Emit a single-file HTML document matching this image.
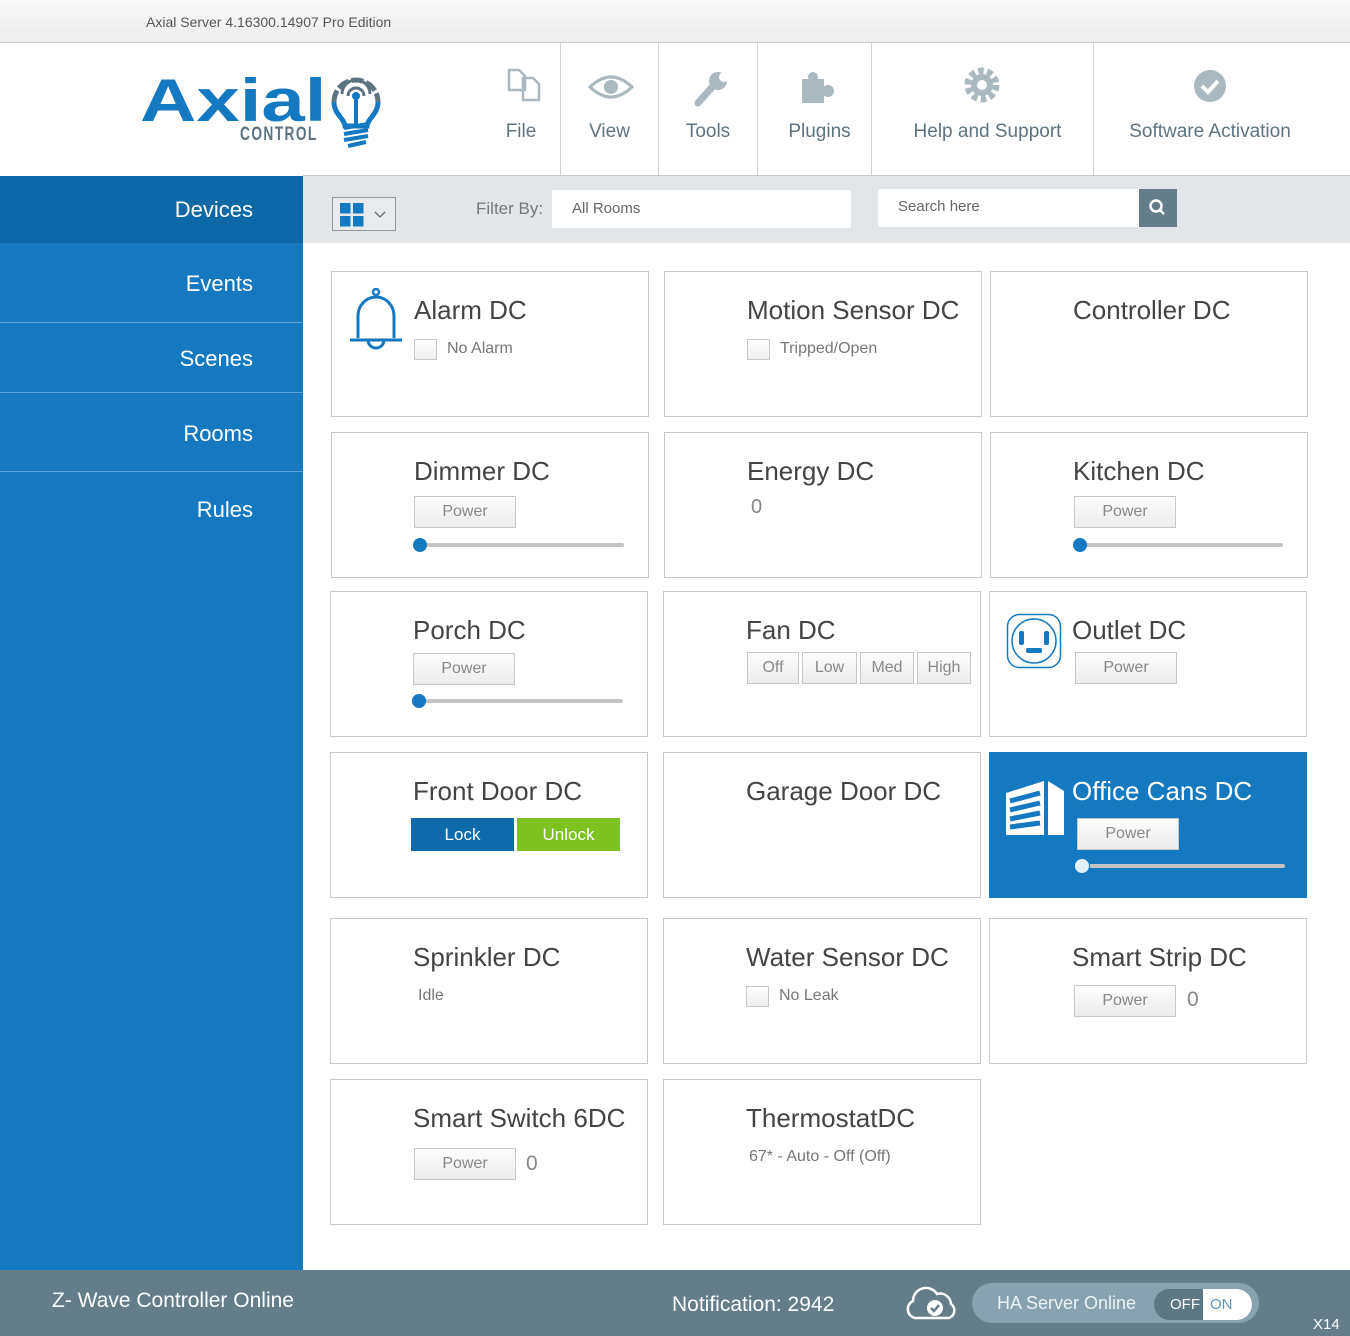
<!DOCTYPE html>
<html><head><meta charset="utf-8"><style>
*{margin:0;padding:0;box-sizing:border-box}
body{width:1350px;height:1336px;position:relative;overflow:hidden;font-family:"Liberation Sans",sans-serif;background:#fff}
.a{position:absolute}
.top{left:0;top:0;width:1350px;height:43px;background:linear-gradient(#fafafa,#ececec);border-bottom:1px solid #cfcfcf;font-size:14px;color:#555;padding:14px 0 0 146px}
.nav{top:43px;height:133px;border-left:1px solid #d3d3d3;text-align:center;color:#5e7380;font-size:19px}
.nav span{position:absolute;left:0;right:0;top:78px}
.side{left:0;top:176px;width:303px;height:1094px;background:#1479c0}
.si{left:0;width:303px;color:#fff;font-size:22px;text-align:right;padding-right:50px;border-bottom:1px solid #5ea3d6}
.bar{left:303px;top:176px;width:1047px;height:67px;background:#e2e6e9}
.card{position:absolute;width:318px;height:146px;border:1px solid #c9c9c9;background:#fff}
.t{position:absolute;left:82px;top:23px;font-size:26px;color:#444;white-space:nowrap;font-weight:300}
.btn{position:absolute;width:102px;height:32px;border:1px solid #c8c8c8;background:linear-gradient(#fdfdfd,#ececec);color:#888;font-size:16px;text-align:center;line-height:30px}
.sl{position:absolute;left:86px;width:206px;height:4px;background:#c4c4c4;border-radius:2px}
.sl:before{content:"";position:absolute;left:-6px;top:-5px;width:14px;height:14px;border-radius:50%;background:#1479c0}
.cb{position:absolute;left:82px;top:67px;width:23px;height:21px;border:1px solid #c8c8c8;background:linear-gradient(#fff,#eee)}
.ct{position:absolute;left:115px;top:68px;font-size:16px;color:#777}
.foot{left:0;top:1270px;width:1350px;height:66px;background:#647d89;color:#fff}
</style></head><body>
<div class="a top">Axial Server 4.16300.14907 Pro Edition</div>

<!-- logo -->
<div class="a" style="left:140px;top:66px;font-size:60px;font-weight:bold;color:#1479c0;line-height:70px;transform:scaleX(1.3);transform-origin:left">Axial</div>
<div class="a" style="left:240px;top:124px;font-size:19px;color:#5e7380;letter-spacing:2px;font-weight:bold;transform:scaleX(.72);transform-origin:left">CONTROL</div>
<svg class="a" style="left:326px;top:64px" width="60" height="86" viewBox="0 0 60 86">
<path d="M8 38 A22 22 0 1 1 52 38" fill="none" stroke="#5e7380" stroke-width="5" stroke-dasharray="12 3"/>
<path d="M8 38 C8 50 18 54 19 62 L41 62 C42 54 52 50 52 38" fill="none" stroke="#1479c0" stroke-width="5"/>
<path d="M16 30 A14 14 0 0 1 44 30 M22 32 A8 8 0 0 1 38 32" fill="none" stroke="#5e7380" stroke-width="3"/>
<circle cx="30" cy="32" r="4" fill="#1479c0"/><path d="M30 32 V62" stroke="#1479c0" stroke-width="4"/>
<path d="M18 64 L42 60 M18 70 L42 66 M18 76 L42 72 M22 82 L40 78" stroke="#1479c0" stroke-width="4"/>
</svg>

<!-- nav -->
<div class="a nav" style="left:473px;width:88px;border-left:none"><svg class="a" style="left:32px;top:23px" width="38" height="36" viewBox="0 0 38 36" fill="none" stroke="#aab8bf" stroke-width="2.5"><path d="M4 4h10l6 6v14H4z M18 12h10l6 6v16H18z"/></svg><span style="left:8px">File</span></div>
<div class="a nav" style="left:560px;width:98px"><svg class="a" style="left:27px;top:30px" width="46" height="28" viewBox="0 0 46 28"><path d="M2 14 Q23 -6 44 14 Q23 34 2 14z" fill="none" stroke="#aab8bf" stroke-width="3"/><circle cx="23" cy="14" r="7" fill="#aab8bf"/></svg><span>View</span></div>
<div class="a nav" style="left:658px;width:99px"><svg class="a" style="left:35px;top:26px" width="36" height="38" viewBox="0 0 36 38"><path d="M4 34 L20 16" stroke="#aab8bf" stroke-width="7" stroke-linecap="round"/><circle cx="24" cy="12" r="9" fill="#aab8bf"/><circle cx="30" cy="8" r="5" fill="#fff"/></svg><span>Tools</span></div>
<div class="a nav" style="left:757px;width:114px"><svg class="a" style="left:42px;top:28px" width="36" height="34" viewBox="0 0 36 34" fill="#aab8bf"><rect x="2" y="8" width="22" height="24"/><circle cx="13" cy="6" r="5"/><circle cx="28" cy="20" r="6"/></svg><span style="left:10px">Plugins</span></div>
<div class="a nav" style="left:871px;width:222px"><svg class="a" style="left:92px;top:24px" width="36" height="36" viewBox="0 0 36 36"><circle cx="18" cy="18" r="13" fill="none" stroke="#aab8bf" stroke-width="9" stroke-dasharray="5 3.2"/><circle cx="18" cy="18" r="11" fill="#aab8bf"/><circle cx="18" cy="18" r="5" fill="#fff"/></svg><span style="left:10px">Help and Support</span></div>
<div class="a nav" style="left:1093px;width:257px"><svg class="a" style="left:99px;top:26px" width="34" height="34" viewBox="0 0 34 34"><circle cx="17" cy="17" r="16" fill="#aab8bf"/><path d="M9 17 l6 6 l10 -11" fill="none" stroke="#fff" stroke-width="4"/></svg><span style="right:24px">Software Activation</span></div>
<div class="a" style="left:303px;top:175px;width:1047px;height:1px;background:#c8c8c8"></div>

<!-- sidebar -->
<div class="a side"></div>
<div class="a si" style="top:176px;height:67px;background:#0d68a8;line-height:67px;padding-right:50px;border:none">Devices</div>
<div class="a si" style="top:243px;height:80px;line-height:82px">Events</div>
<div class="a si" style="top:323px;height:70px;line-height:72px">Scenes</div>
<div class="a si" style="top:393px;height:79px;line-height:82px">Rooms</div>
<div class="a si" style="top:472px;height:75px;line-height:76px;border:none">Rules</div>

<!-- toolbar -->
<div class="a bar"></div>
<div class="a" style="left:332px;top:197px;width:64px;height:34px;border:1px solid #999;background:#e8ebed"></div>
<svg class="a" style="left:340px;top:203px" width="50" height="24" viewBox="0 0 50 24"><rect x="0" y="0" width="10.5" height="10.5" fill="#1479c0"/><rect x="13" y="0" width="10.5" height="10.5" fill="#1479c0"/><rect x="0" y="13" width="10.5" height="10.5" fill="#1479c0"/><rect x="13" y="13" width="10.5" height="10.5" fill="#1479c0"/><path d="M35 9 l5 5 l5 -5" fill="none" stroke="#666" stroke-width="1.3"/></svg>
<div class="a" style="left:476px;top:199px;font-size:17px;color:#777">Filter By:</div>
<div class="a" style="left:552px;top:190px;width:299px;height:38px;background:#fff;font-size:15px;color:#666;padding:10px 0 0 20px">All Rooms</div>
<div class="a" style="left:878px;top:189px;width:261px;height:38px;background:#fff;font-size:15px;color:#666;padding:9px 0 0 20px">Search here</div>
<div class="a" style="left:1139px;top:189px;width:38px;height:38px;background:#647d89"><svg width="38" height="38"><circle cx="17" cy="17" r="5.5" fill="none" stroke="#fff" stroke-width="2.5"/><path d="M21 21 l4 4" stroke="#fff" stroke-width="2.5"/></svg></div>

<!-- row 1 -->
<div class="card" style="left:331px;top:271px"><svg class="a" style="left:16px;top:16px" width="56" height="64" viewBox="0 0 56 64"><circle cx="28" cy="4" r="3" fill="none" stroke="#1479c0" stroke-width="2.5"/><path d="M10 50 V28 A18 19 0 0 1 46 28 V50 M2 52 H54" fill="none" stroke="#1479c0" stroke-width="3"/><path d="M20 52 A8 8 0 0 0 36 52" fill="none" stroke="#1479c0" stroke-width="3"/></svg><div class="t">Alarm DC</div><div class="cb"></div><div class="ct">No Alarm</div></div>
<div class="card" style="left:664px;top:271px"><div class="t">Motion Sensor DC</div><div class="cb"></div><div class="ct">Tripped/Open</div></div>
<div class="card" style="left:990px;top:271px"><div class="t">Controller DC</div></div>
<!-- row 2 -->
<div class="card" style="left:331px;top:432px"><div class="t">Dimmer DC</div><div class="btn" style="left:82px;top:63px">Power</div><div class="sl" style="top:110px;left:87px;width:205px"></div></div>
<div class="card" style="left:664px;top:432px"><div class="t">Energy DC</div><div class="a" style="left:86px;top:63px;font-size:20px;color:#888">0</div></div>
<div class="card" style="left:990px;top:432px"><div class="t">Kitchen DC</div><div class="btn" style="left:83px;top:63px">Power</div><div class="sl" style="top:110px;left:88px;width:204px"></div></div>
<!-- row 3 -->
<div class="card" style="left:330px;top:591px"><div class="t">Porch DC</div><div class="btn" style="left:82px;top:61px">Power</div><div class="sl" style="top:107px;left:87px;width:205px"></div></div>
<div class="card" style="left:663px;top:591px"><div class="t">Fan DC</div>
<div class="btn" style="left:83px;top:60px;width:52px">Off</div><div class="btn" style="left:138px;top:60px;width:55px">Low</div><div class="btn" style="left:196px;top:60px;width:54px">Med</div><div class="btn" style="left:253px;top:60px;width:54px">High</div></div>
<div class="card" style="left:989px;top:591px"><svg class="a" style="left:16px;top:21px" width="56" height="56" viewBox="0 0 56 56"><rect x="1.5" y="1.5" width="53" height="53" rx="12" fill="none" stroke="#1479c0" stroke-width="1.5"/><circle cx="28" cy="28" r="22" fill="none" stroke="#1479c0" stroke-width="1.5"/><rect x="13" y="18" width="5" height="14" rx="2" fill="#1479c0"/><rect x="38" y="18" width="5" height="14" rx="2" fill="#1479c0"/><rect x="20" y="35" width="16" height="5" rx="2" fill="#1479c0"/></svg><div class="t">Outlet DC</div><div class="btn" style="left:85px;top:60px">Power</div></div>
<!-- row 4 -->
<div class="card" style="left:330px;top:752px"><div class="t">Front Door DC</div><div class="a" style="left:80px;top:65px;width:103px;height:33px;background:#0e6aab;color:#fff;font-size:17px;text-align:center;line-height:33px">Lock</div><div class="a" style="left:186px;top:65px;width:103px;height:33px;background:#7dc31f;color:#fff;font-size:17px;text-align:center;line-height:33px">Unlock</div></div>
<div class="card" style="left:663px;top:752px"><div class="t">Garage Door DC</div></div>
<div class="card" style="left:989px;top:752px;background:#1479c0;border-color:#1479c0"><svg class="a" style="left:14px;top:26px" width="62" height="58" viewBox="0 0 62 58"><path d="M2 14 L40 2 V56 H2z" fill="#fff"/><path d="M44 2 L60 12 V56 H44z" fill="#fff"/><path d="M6 22 L36 14 M6 31 L36 24 M6 40 L36 34 M6 48 L36 44" stroke="#1479c0" stroke-width="5"/></svg><div class="t" style="color:#fff">Office Cans DC</div><div class="btn" style="left:87px;top:65px">Power</div><div class="sl" style="top:111px;left:92px;width:203px"></div><div class="a" style="left:85px;top:106px;width:14px;height:14px;border-radius:50%;background:#e3f2fc"></div></div>
<!-- row 5 -->
<div class="card" style="left:330px;top:918px"><div class="t">Sprinkler DC</div><div class="a" style="left:87px;top:68px;font-size:16px;color:#777">Idle</div></div>
<div class="card" style="left:663px;top:918px"><div class="t">Water Sensor DC</div><div class="cb"></div><div class="ct">No Leak</div></div>
<div class="card" style="left:989px;top:918px"><div class="t">Smart Strip DC</div><div class="btn" style="left:84px;top:66px">Power</div><div class="a" style="left:197px;top:69px;font-size:21px;color:#888">0</div></div>
<!-- row 6 -->
<div class="card" style="left:330px;top:1079px"><div class="t">Smart Switch 6DC</div><div class="btn" style="left:83px;top:68px">Power</div><div class="a" style="left:195px;top:72px;font-size:21px;color:#888">0</div></div>
<div class="card" style="left:663px;top:1079px"><div class="t">ThermostatDC</div><div class="a" style="left:85px;top:68px;font-size:16px;color:#777">67* - Auto - Off (Off)</div></div>

<!-- footer -->
<div class="a foot"></div>
<div class="a" style="left:52px;top:1289px;font-size:21px;color:#fff">Z- Wave Controller Online</div>
<div class="a" style="left:672px;top:1293px;font-size:21px;color:#fff">Notification: 2942</div>
<svg class="a" style="left:903px;top:1284px" width="56" height="38" viewBox="0 0 56 38"><path d="M12 34 A9 9 0 0 1 10 17 A13 13 0 0 1 34 10 A11 11 0 0 1 48 20 A8 8 0 0 1 46 34 Z" fill="none" stroke="#fff" stroke-width="2.5"/><circle cx="32" cy="24" r="8" fill="#fff"/><path d="M28 24 l3 3 l5 -6" fill="none" stroke="#647d89" stroke-width="2.5"/></svg>
<div class="a" style="left:972px;top:1283px;width:287px;height:40px;border-radius:20px;background:#88a3af"></div>
<div class="a" style="left:997px;top:1293px;font-size:18px;color:#eef3f5">HA Server Online</div>
<div class="a" style="left:1154px;top:1289px;width:98px;height:31px;border-radius:16px;background:#5d7783;overflow:hidden"><div class="a" style="left:49px;top:0;width:49px;height:31px;background:#fff"></div><span class="a" style="left:16px;top:7px;font-size:15px;color:#fff">OFF</span><span class="a" style="left:56px;top:7px;font-size:15px;color:#5e98b5">ON</span></div>
<div class="a" style="left:1313px;top:1316px;font-size:15px;color:#fff">X14</div>
</body></html>
